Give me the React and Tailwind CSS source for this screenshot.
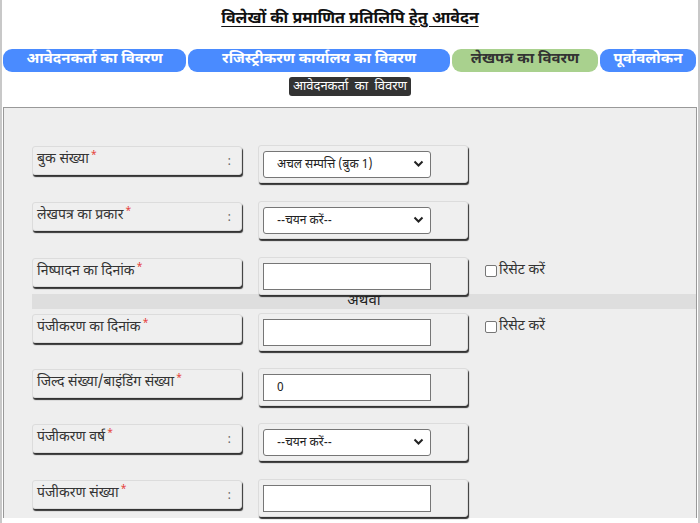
import React, { useState } from "react";

const FONT = { fontFamily: '"Noto Sans Devanagari", "Noto Sans", "Liberation Sans", sans-serif' };

const TABS = [
  { label: "आवेदनकर्ता का विवरण", w: "w-[183px]", active: false },
  { label: "रजिस्ट्रीकरण कार्यालय का विवरण", w: "w-[262px]", active: false },
  { label: "लेखपत्र का विवरण", w: "w-[146px]", active: true },
  { label: "पूर्वावलोकन", w: "w-[96px]", active: false },
];

function Label({ text, colon }) {
  return (
    <div className="w-[210px] h-[29px] shrink-0 rounded-[3px] border border-[#dcdcdc] bg-[#efefef] shadow-[1px_2px_1px_#333] flex items-start justify-between pl-[4px] pr-[10px] pt-[2px] text-[14px] text-[#333]">
      <span>
        {text}
        <sup className="text-[#e53935] text-[10px] ml-[2px]">*</sup>
      </span>
      {colon && <span className="text-[#666] text-[12px] pt-[4px]">:</span>}
    </div>
  );
}

function Box({ children }) {
  return (
    <div className="w-[210px] h-[38px] shrink-0 rounded-[3px] border border-[#dcdcdc] bg-[#efefef] shadow-[1px_2px_1px_#333] pl-[4px] pt-[5px]">
      {children}
    </div>
  );
}

function Select({ value }) {
  return (
    <div className="relative w-[168px] h-[27px]">
      <select
        className="appearance-none w-full h-full rounded-[3px] border border-[#767676] bg-white pl-[13px] text-[12px] text-[#222]"
        defaultValue={value}
      >
        <option>{value}</option>
      </select>
      <svg className="absolute right-[7px] top-[9px] pointer-events-none" width="11" height="8" viewBox="0 0 11 8">
        <path d="M1.5 1.5 L5.5 5.5 L9.5 1.5" fill="none" stroke="#222" strokeWidth="2" />
      </svg>
    </div>
  );
}

function Input({ value }) {
  return (
    <input
      className="w-[168px] h-[27px] border border-[#767676] bg-white pl-[13px] text-[12px] text-[#222]"
      defaultValue={value}
    />
  );
}

function Reset() {
  const [checked, setChecked] = useState(false);
  return (
    <label className="ml-[17px] mt-[3px] flex items-center text-[14px] text-[#333]">
      <input
        type="checkbox"
        checked={checked}
        onChange={(e) => setChecked(e.target.checked)}
        className="appearance-none w-[12px] h-[12px] rounded-[2px] border border-[#767676] bg-white mr-[2px]"
      />
      रिसेट करें
    </label>
  );
}

function Row({ label, colon, children, reset, mb }) {
  return (
    <div className={"flex items-start " + mb}>
      <div className="mt-[1px]">
        <Label text={label} colon={colon} />
      </div>
      <div className="ml-[16px]">
        <Box>{children}</Box>
      </div>
      {reset && <Reset />}
    </div>
  );
}

export default function App() {
  return (
    <div style={FONT} className="w-[700px] h-[523px] overflow-hidden bg-white border-l-2 border-r-2 border-[#c8c8c8]">
      <div className="pt-[8px] text-center">
        <span className="text-[16px] font-bold underline underline-offset-[3px] text-[#111]">
          विलेखों की प्रमाणित प्रतिलिपि हेतु आवेदन
        </span>
      </div>

      <div className="mt-[17px] flex gap-[2px] pl-[1px]">
        {TABS.map((t) => (
          <div
            key={t.label}
            className={
              t.w +
              " h-[23px] rounded-[9px] flex items-center justify-center text-[15px] font-bold " +
              (t.active ? "bg-[#a9d18e] text-[#333]" : "bg-[#4a8bff] text-white")
            }
          >
            {t.label}
          </div>
        ))}
      </div>

      <div className="mt-[5px] flex justify-center">
        <span className="h-[19px] px-[4px] rounded-[3px] bg-[#333] text-white text-[13px] leading-[19px] [word-spacing:3px]">
          आवेदनकर्ता का विवरण
        </span>
      </div>

      <div className="mt-[11px] ml-[1px] w-[694px] h-[411px] bg-[#eeeeee] border-t border-l border-r border-[#999] pl-[28px] pt-[37px]">
        <Row label="बुक संख्या" colon mb="mb-[18px]">
          <Select value="अचल सम्पत्ति (बुक 1)" />
        </Row>
        <Row label="लेखपत्र का प्रकार" colon mb="mb-[18px]">
          <Select value="--चयन करें--" />
        </Row>
        <Row label="निष्पादन का दिनांक" reset mb="">
          <Input value="" />
        </Row>
        <div className="-mt-[1px] h-[15px] bg-[#dedede] flex items-center justify-center text-[15px] text-[#222] leading-none">
          अथवा
        </div>
        <div className="mt-[4px]">
          <Row label="पंजीकरण का दिनांक" reset mb="mb-[17px]">
            <Input value="" />
          </Row>
          <Row label="जिल्द संख्या/बाइंडिंग संख्या" mb="mb-[17px]">
            <Input value="0" />
          </Row>
          <Row label="पंजीकरण वर्ष" colon mb="mb-[18px]">
            <Select value="--चयन करें--" />
          </Row>
          <Row label="पंजीकरण संख्या" colon mb="">
            <Input value="" />
          </Row>
        </div>
      </div>
    </div>
  );
}
